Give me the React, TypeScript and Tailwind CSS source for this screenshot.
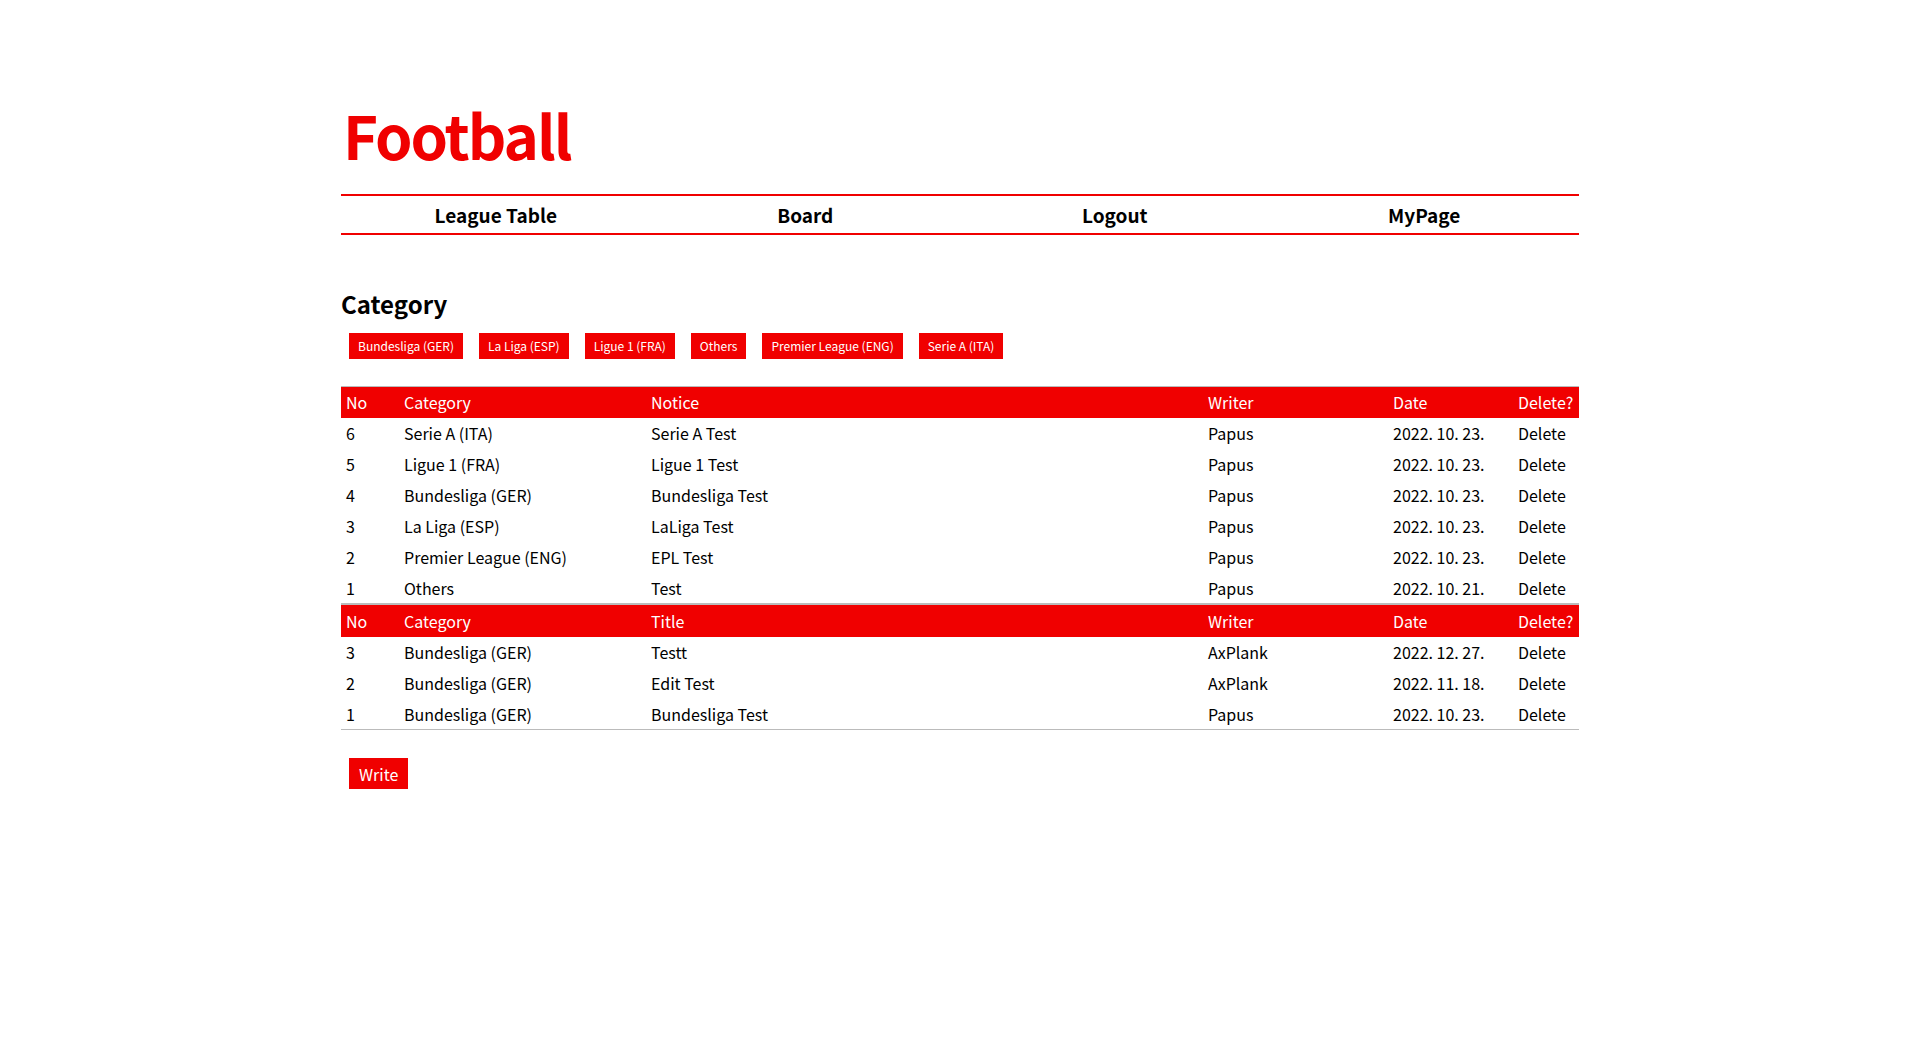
const categories = [
  "Bundesliga (GER)",
  "La Liga (ESP)",
  "Ligue 1 (FRA)",
  "Others",
  "Premier League (ENG)",
  "Serie A (ITA)",
];

const notices = [
  { no: 6, category: "Serie A (ITA)", title: "Serie A Test", writer: "Papus", date: "2022. 10. 23." },
  { no: 5, category: "Ligue 1 (FRA)", title: "Ligue 1 Test", writer: "Papus", date: "2022. 10. 23." },
  { no: 4, category: "Bundesliga (GER)", title: "Bundesliga Test", writer: "Papus", date: "2022. 10. 23." },
  { no: 3, category: "La Liga (ESP)", title: "LaLiga Test", writer: "Papus", date: "2022. 10. 23." },
  { no: 2, category: "Premier League (ENG)", title: "EPL Test", writer: "Papus", date: "2022. 10. 23." },
  { no: 1, category: "Others", title: "Test", writer: "Papus", date: "2022. 10. 21." },
];

const posts = [
  { no: 3, category: "Bundesliga (GER)", title: "Testt", writer: "AxPlank", date: "2022. 12. 27." },
  { no: 2, category: "Bundesliga (GER)", title: "Edit Test", writer: "AxPlank", date: "2022. 11. 18." },
  { no: 1, category: "Bundesliga (GER)", title: "Bundesliga Test", writer: "Papus", date: "2022. 10. 23." },
];

type Row = (typeof notices)[number];

function HeadRow({ label, thick }: { label: string; thick?: boolean }) {
  return (
    <tr
      className={`bg-[#f00000] text-white border-[#bbbbbb] ${thick ? "h-[33px] border-t-2" : "h-[31px] border-t"}`}
    >
      <th className="px-[5px] text-left font-normal">No</th>
      <th className="px-[5px] text-left font-normal">Category</th>
      <th className="px-[5px] text-left font-normal">{label}</th>
      <th className="px-[5px] text-left font-normal">Writer</th>
      <th className="px-[5px] text-left font-normal">Date</th>
      <th className="px-[5px] text-left font-normal">Delete?</th>
    </tr>
  );
}

function BodyRows({ rows }: { rows: Row[] }) {
  return (
    <>
      {rows.map((r, i) => (
        <tr
          key={r.no}
          className={`h-[31px] ${i === rows.length - 1 ? "border-b border-[#bbbbbb]" : ""}`}
        >
          <td className="px-[5px]">{r.no}</td>
          <td className="px-[5px]">{r.category}</td>
          <td className="px-[5px]">{r.title}</td>
          <td className="px-[5px]">{r.writer}</td>
          <td className="px-[5px]">{r.date}</td>
          <td className="px-[5px] cursor-pointer">Delete</td>
        </tr>
      ))}
    </>
  );
}

export default function App() {
  return (
    <div className="min-h-screen bg-white text-black font-['Noto_Sans_CJK_KR','Noto_Sans',sans-serif]">
      <div className="w-[1238px] mx-auto pt-[102px]">
        {/* Title */}
        <h1 className="text-[60px] leading-[64px] font-bold text-[#f00000] tracking-[-2px] pl-[2px]">
          Football
        </h1>

        {/* Nav */}
        <nav className="mt-[28px] h-[41px] border-y-2 border-[#f00000] grid grid-cols-4 items-center">
          {["League Table", "Board", "Logout", "MyPage"].map((item) => (
            <a key={item} className="text-center text-[19px] font-bold leading-none cursor-pointer">
              {item}
            </a>
          ))}
        </nav>

        {/* Category */}
        <h2 className="mt-[54px] text-[24px] leading-[30px] font-bold">Category</h2>
        <div className="mt-[14px] flex">
          {categories.map((c) => (
            <button
              key={c}
              className="mx-2 h-[26px] px-[9px] bg-[#f00000] text-white text-[12px] leading-none"
            >
              {c}
            </button>
          ))}
        </div>

        {/* Boards */}
        <table className="mt-[27px] w-full table-fixed border-collapse text-[16px] leading-none">
          <colgroup>
            <col className="w-[58px]" />
            <col className="w-[247px]" />
            <col className="w-[557px]" />
            <col className="w-[185px]" />
            <col className="w-[125px]" />
            <col className="w-[66px]" />
          </colgroup>
          <thead>
            <HeadRow label="Notice" />
          </thead>
          <tbody>
            <BodyRows rows={notices} />
          </tbody>
          <thead>
            <HeadRow label="Title" thick />
          </thead>
          <tbody>
            <BodyRows rows={posts} />
          </tbody>
        </table>

        <button className="mt-[28px] ml-2 h-[31px] px-[10px] bg-[#f00000] text-white text-[16px] leading-none">
          Write
        </button>
      </div>
    </div>
  );
}
